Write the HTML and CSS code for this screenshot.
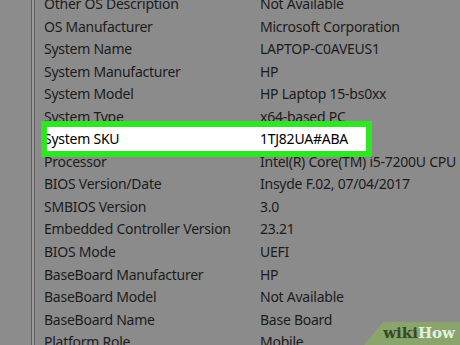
FILE: index.html
```html
<!DOCTYPE html>
<html>
<head>
  <meta charset="utf-8">
  <title>System Information</title>
  <link rel="stylesheet" href="styles.css">
</head>
<body>
  <div class="window">
    <div class="tree-pane"></div>
    <div class="divider"></div>
    <div class="details">
      <div class="row"><span class="item">Other OS Description</span><span class="value">Not Available</span></div>
      <div class="row"><span class="item">OS Manufacturer</span><span class="value">Microsoft Corporation</span></div>
      <div class="row"><span class="item">System Name</span><span class="value">LAPTOP-C0AVEUS1</span></div>
      <div class="row"><span class="item">System Manufacturer</span><span class="value">HP</span></div>
      <div class="row"><span class="item">System Model</span><span class="value">HP Laptop 15-bs0xx</span></div>
      <div class="row"><span class="item">System Type</span><span class="value">x64-based PC</span></div>
      <div class="row highlight"><span class="item">System SKU</span><span class="value">1TJ82UA#ABA</span></div>
      <div class="row"><span class="item">Processor</span><span class="value">Intel(R) Core(TM) i5-7200U CPU @ 2.50GHz</span></div>
      <div class="row"><span class="item">BIOS Version/Date</span><span class="value">Insyde F.02, 07/04/2017</span></div>
      <div class="row"><span class="item">SMBIOS Version</span><span class="value">3.0</span></div>
      <div class="row"><span class="item">Embedded Controller Version</span><span class="value">23.21</span></div>
      <div class="row"><span class="item">BIOS Mode</span><span class="value">UEFI</span></div>
      <div class="row"><span class="item">BaseBoard Manufacturer</span><span class="value">HP</span></div>
      <div class="row"><span class="item">BaseBoard Model</span><span class="value">Not Available</span></div>
      <div class="row"><span class="item">BaseBoard Name</span><span class="value">Base Board</span></div>
      <div class="row"><span class="item">Platform Role</span><span class="value">Mobile</span></div>
    </div>
  </div>
  <div class="watermark"><span class="wiki">wiki</span><span class="how">How</span></div>
</body>
</html>
```

FILE: styles.css
```css
html, body {
  margin: 0;
  padding: 0;
  width: 100%;
  height: 100%;
  overflow: hidden;
  background: #8b8b8b;
  font-family: 'Noto Sans', 'Open Sans', sans-serif;
  color: #1c1c1c;
}

.window {
  display: flex;
  height: 100%;
}

.tree-pane {
  width: 31px;
  flex-shrink: 0;
  background: #8d8d8d;
}

.divider {
  width: 2px;
  flex-shrink: 0;
  border-left: 1px solid #5e5e5e;
  border-right: 1px solid #5e5e5e;
  background: #9a9a9a;
}

.details {
  flex: 1;
  margin-top: -7px;
  overflow: hidden;
}

.row {
  display: grid;
  grid-template-columns: 216px 1fr;
  height: 22.55px;
  line-height: 22.55px;
  padding-left: 9px;
  font-size: 14px;
  letter-spacing: -0.25px;
  white-space: nowrap;
  position: relative;
}

.row span {
  position: relative;
  z-index: 1;
}

.highlight {
  color: #000;
}

.highlight::before,
.highlight::after {
  content: '';
  position: absolute;
  top: -7px;
  bottom: -6px;
  left: 6px;
  width: 331px;
  box-sizing: border-box;
}

.highlight::before {
  background: #ffffff;
  z-index: 0;
}

.highlight::after {
  border: 6px solid #2fe624;
  z-index: 2;
}

.watermark {
  position: absolute;
  right: 0;
  bottom: 0;
  width: 96px;
  height: 23px;
  background: #8aa56c;
  clip-path: polygon(19px 0, 100% 0, 100% 100%, 0 100%);
  font-family: 'DejaVu Serif', 'Liberation Serif', serif;
  font-weight: bold;
  font-size: 15px;
  line-height: 23px;
  text-align: right;
  padding-right: 5px;
  box-sizing: border-box;
}

.wiki {
  color: #344a26;
}

.how {
  color: #e6eedf;
}
```
